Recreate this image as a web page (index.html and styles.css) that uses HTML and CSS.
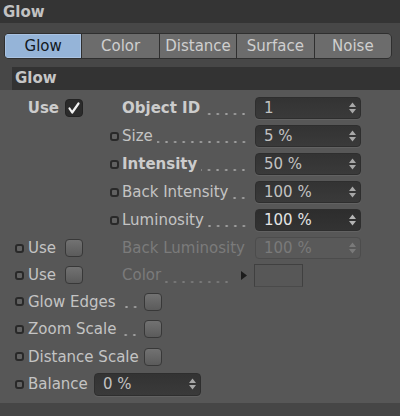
FILE: index.html
```html
<!DOCTYPE html>
<html>
<head>
<meta charset="utf-8">
<link rel="stylesheet" href="styles.css">
</head>
<body>
<div class="titlebar">Glow</div>
<div class="upper">
  <div class="tabs">
    <div class="tab active">Glow</div>
    <div class="tab">Color</div>
    <div class="tab">Distance</div>
    <div class="tab">Surface</div>
    <div class="tab">Noise</div>
  </div>
  <div class="section">Glow</div>
</div>
<div class="panel">
  <div class="row">
    <div class="lead lead-use"><span class="b">Use</span><span class="check on"><svg width="16" height="16" viewBox="0 0 16 16"><path d="M3.5 8.5 L6.2 12.5 L12.5 3.5" fill="none" stroke="#f2f2f2" stroke-width="2.2" stroke-linecap="round" stroke-linejoin="round"/></svg></span></div>
    <div class="lab"><span class="b">Object ID</span><span class="dots"></span></div>
    <div class="field"><span>1</span><svg class="spin" width="7" height="12" viewBox="0 0 7 12"><path d="M0 5 L3.5 0.5 L7 5 Z M0 7 L3.5 11.5 L7 7 Z" fill="#a8a8a8"/></svg></div>
  </div>
  <div class="row">
    <div class="lead"><span class="kf"></span></div>
    <div class="lab"><span>Size</span><span class="dots"></span></div>
    <div class="field"><span>5 %</span><svg class="spin" width="7" height="12" viewBox="0 0 7 12"><path d="M0 5 L3.5 0.5 L7 5 Z M0 7 L3.5 11.5 L7 7 Z" fill="#a8a8a8"/></svg></div>
  </div>
  <div class="row">
    <div class="lead"><span class="kf"></span></div>
    <div class="lab"><span class="b">Intensity</span><span class="dots"></span></div>
    <div class="field"><span>50 %</span><svg class="spin" width="7" height="12" viewBox="0 0 7 12"><path d="M0 5 L3.5 0.5 L7 5 Z M0 7 L3.5 11.5 L7 7 Z" fill="#a8a8a8"/></svg></div>
  </div>
  <div class="row">
    <div class="lead"><span class="kf"></span></div>
    <div class="lab"><span>Back Intensity</span><span class="dots"></span></div>
    <div class="field"><span>100 %</span><svg class="spin" width="7" height="12" viewBox="0 0 7 12"><path d="M0 5 L3.5 0.5 L7 5 Z M0 7 L3.5 11.5 L7 7 Z" fill="#a8a8a8"/></svg></div>
  </div>
  <div class="row">
    <div class="lead"><span class="kf"></span></div>
    <div class="lab"><span>Luminosity</span><span class="dots"></span></div>
    <div class="field focus"><span>100 %</span><svg class="spin" width="7" height="12" viewBox="0 0 7 12"><path d="M0 5 L3.5 0.5 L7 5 Z M0 7 L3.5 11.5 L7 7 Z" fill="#b4b4b4"/></svg></div>
  </div>
  <div class="row">
    <div class="lead lead-left"><span class="kf"></span><span class="ulab">Use</span><span class="check"></span></div>
    <div class="lab dis"><span>Back Luminosity</span></div>
    <div class="field off"><span>100 %</span><svg class="spin" width="7" height="12" viewBox="0 0 7 12"><path d="M0 5 L3.5 0.5 L7 5 Z M0 7 L3.5 11.5 L7 7 Z" fill="#7a7a7a"/></svg></div>
  </div>
  <div class="row short">
    <div class="lead lead-left"><span class="kf"></span><span class="ulab">Use</span><span class="check"></span></div>
    <div class="lab dis"><span>Color</span><span class="dots dim"></span><svg class="tri" width="6" height="9" viewBox="0 0 6 9"><path d="M0 0 L6 4.5 L0 9 Z" fill="#1c1c1c"/></svg></div>
    <div class="swatch"></div>
  </div>
  <div class="wrow">
    <span class="kf"></span>
    <div class="wlab"><span>Glow Edges</span><span class="dots"></span></div>
    <span class="check"></span>
  </div>
  <div class="wrow">
    <span class="kf"></span>
    <div class="wlab"><span>Zoom Scale</span><span class="dots"></span></div>
    <span class="check"></span>
  </div>
  <div class="wrow">
    <span class="kf"></span>
    <div class="wlab"><span>Distance Scale</span><span class="dots"></span></div>
    <span class="check"></span>
  </div>
  <div class="wrow">
    <span class="kf"></span>
    <div class="wlab bal"><span>Balance</span></div>
    <div class="field wide"><span>0 %</span><svg class="spin" width="7" height="12" viewBox="0 0 7 12"><path d="M0 5 L3.5 0.5 L7 5 Z M0 7 L3.5 11.5 L7 7 Z" fill="#a8a8a8"/></svg></div>
  </div>
</div>
<div class="footer"></div>
</body>
</html>
```
FILE: styles.css
```css
html, body {
  margin: 0;
  padding: 0;
}
body {
  width: 400px;
  height: 416px;
  overflow: hidden;
  background: #575757;
  font-family: "DejaVu Sans", sans-serif;
  font-size: 15px;
  color: #c4c4c4;
}
.titlebar {
  box-sizing: border-box;
  height: 23px;
  padding: 1px 0 0 3px;
  line-height: 23px;
  background: #343434;
  font-weight: bold;
  color: #c2c2c2;
}
.upper {
  box-sizing: border-box;
  height: 67px;
  padding-top: 10px;
  background: #474747;
}
.tabs {
  box-sizing: border-box;
  display: flex;
  gap: 1px;
  height: 26px;
  margin: 0 8px 0 4px;
  border: 1px solid #2f2f2f;
  border-radius: 5px;
  background: #2f2f2f;
  overflow: hidden;
}
.tab {
  flex: 1;
  text-align: center;
  line-height: 24px;
  background: #6c6c6c;
  color: #cfcfcf;
}
.tab.active {
  background: #95b4d8;
  color: #121820;
  box-shadow: inset 0 0 0 1px #aac3e2;
}
.section {
  box-sizing: border-box;
  height: 23px;
  margin: 8px 0 0 12px;
  padding-left: 3px;
  line-height: 23px;
  background: #333333;
  font-weight: bold;
  color: #c6c6c6;
}
.panel {
  box-sizing: border-box;
  height: 313px;
  padding-top: 4px;
  display: flex;
  flex-direction: column;
}
.row {
  display: grid;
  grid-template-columns: 122px 133px 106px;
  align-items: center;
  height: 28px;
}
.row.short {
  height: 26px;
}
.b {
  font-weight: bold;
  color: #cccccc;
}
.lead {
  display: flex;
  align-items: center;
  justify-content: flex-end;
  padding-right: 3px;
}
.lead-use {
  gap: 6px;
  padding-right: 39px;
}
.lead-left {
  justify-content: flex-start;
  padding-left: 15px;
  padding-right: 39px;
}
.ulab {
  margin-left: 4px;
}
.lead-left .check {
  margin-left: auto;
}
.kf {
  box-sizing: border-box;
  flex: none;
  width: 9px;
  height: 9px;
  border: 2px solid #292929;
  border-radius: 3px;
  background: #616161;
}
.check {
  box-sizing: border-box;
  flex: none;
  display: flex;
  align-items: center;
  justify-content: center;
  width: 18px;
  height: 18px;
  border: 1px solid #383838;
  border-radius: 4px;
  background: linear-gradient(#727272, #5b5b5b);
}
.check.on {
  background: #2b2b2b;
  border-color: #232323;
}
.lab {
  display: flex;
  align-items: center;
  align-self: stretch;
  padding-right: 7px;
  white-space: nowrap;
}
.lab.dis {
  color: #7b7b7b;
}
.dots {
  flex: 1;
  align-self: stretch;
  margin-left: 4px;
  background-image: radial-gradient(circle at center, #a2a2a2 0.9px, transparent 1.4px);
  background-size: 8.6px 4px;
  background-repeat: repeat-x;
  background-position: right 0 top 17.5px;
}
.dots.dim {
  background-image: radial-gradient(circle at center, #7b7b7b 0.9px, transparent 1.4px);
}
.tri {
  flex: none;
  margin: 0 1px 0 10px;
}
.field {
  box-sizing: border-box;
  display: flex;
  align-items: center;
  width: 106px;
  height: 22px;
  padding: 0 4px 0 8px;
  border: 1px solid #2e2e2e;
  border-radius: 4px;
  background: linear-gradient(#333333, #3a3a3a);
  box-shadow: 0 1px 0 #626262;
  color: #c2c2c2;
}
.field.focus {
  background: linear-gradient(#2d2d2d, #333333);
  color: #e4e4e4;
}
.field.off {
  background: #595959;
  border-color: #4c4c4c;
  box-shadow: none;
  color: #7a7a7a;
}
.field.wide {
  width: 107px;
  height: 23px;
}
.spin {
  margin-left: auto;
  flex: none;
}
.swatch {
  box-sizing: border-box;
  width: 49px;
  height: 23px;
  margin-left: -1px;
  border: 1px solid #404040;
  border-bottom-color: #4a4a4a;
  background: #575757;
}
.wrow {
  display: flex;
  align-items: center;
  height: 27.5px;
  padding-left: 15px;
}
.wlab {
  box-sizing: border-box;
  display: flex;
  align-items: center;
  align-self: stretch;
  width: 116px;
  margin-left: 4px;
  padding-right: 5px;
  white-space: nowrap;
}
.wlab .dots {
  background-position: right 0 top 17px;
}
.wlab.bal {
  width: 66px;
}
.footer {
  height: 13px;
  background: #464646;
}
```
